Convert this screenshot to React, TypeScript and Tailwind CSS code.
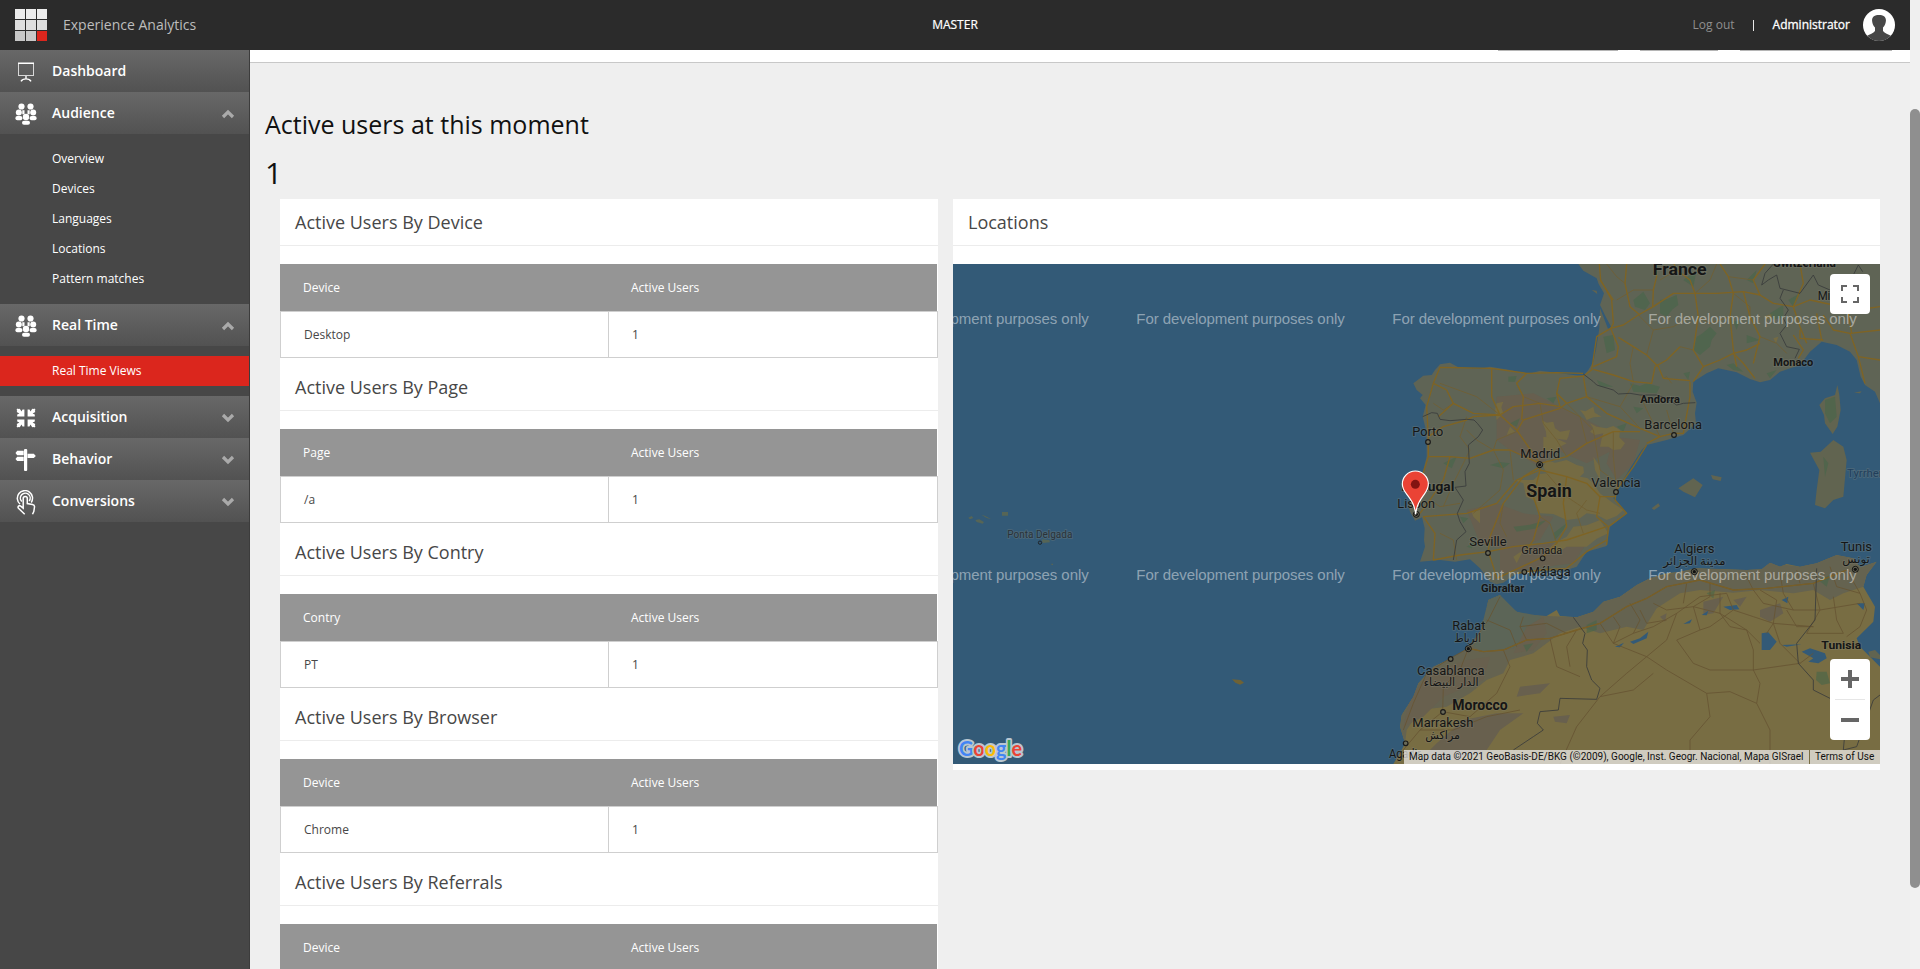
import type { ReactNode } from "react";

const SEA = "#335a77";

/* ---------- icons ---------- */

function BoardIcon() {
  return (
    <svg width="20" height="22" viewBox="0 0 20 22" fill="none" stroke="#fff">
      <rect x="2.5" y="2.5" width="15" height="12" stroke="#d8d8d8" />
      <path d="M2 2.2h16M10 15v3M5 20.4c1-1.8 2.6-2.5 5-2.5s4 .7 5 2.5" strokeWidth="1.4" />
    </svg>
  );
}

function PeopleIcon() {
  return (
    <svg width="22" height="22" viewBox="0 0 22 22" fill="#fff">
      <circle cx="6.5" cy="3.5" r="3.1" />
      <circle cx="15.5" cy="3.5" r="3.1" />
      <circle cx="3.8" cy="9.6" r="3" />
      <circle cx="18.2" cy="9.6" r="3" />
      <path d="M7.3 7.3h2.2v4H7.3zM12.500 7.3h2.2v4h-2.2z" />
      <rect x="0.4" y="13" width="7" height="4.2" rx="2" />
      <rect x="14.600" y="13" width="7" height="4.2" rx="2" />
      <circle cx="11" cy="14" r="3.2" />
      <rect x="7" y="17.8" width="8" height="4" rx="2" />
    </svg>
  );
}

function ArrowsInIcon() {
  const arrow = "M8.4 1.5V8.4H1.2V6.5L3.4 5.6 0.7 3.9 1.2 2.8 0.5 1.7 1.6 0.5 2.6 1.1 3.8 0.7 5.5 3.5 6.5 1.5Z";
  return (
    <svg width="20" height="20" viewBox="0 0 20 20" fill="#fff">
      <path d={arrow} />
      <path d={arrow} transform="matrix(-1 0 0 1 20 0)" />
      <path d={arrow} transform="matrix(1 0 0 -1 0 20)" />
      <path d={arrow} transform="matrix(-1 0 0 -1 20 20)" />
    </svg>
  );
}

function SignpostIcon() {
  return (
    <svg width="22" height="22" viewBox="0 0 22 22" fill="#fff">
      <path d="M2.2 1.8H8.7V6.2H2.2L0.5 4ZM2.2 7.7H8.7V12H2.2L0.5 9.9ZM12.5 4.7H18.8L20.8 6.9 18.8 9H12.5Z" />
      <rect x="9" y="0" width="3.2" height="22" rx="1" />
    </svg>
  );
}

function TouchIcon() {
  return (
    <svg width="20" height="25" viewBox="0 0 20 25" fill="none" stroke="#fff" strokeWidth="1.5">
      <path d="M4 14A7.6 7.6 0 1 1 15.2 12.5" />
      <path d="M5.8 11.5A4.900 4.900 0 1 1 13.2 11" />
      <path d="M8.7 24.3 2.5 18.3c-1.3-1.7.7-3.4 2.2-2.2l2.500 2V8.5c0-2.6 4.1-2.6 4.1 0v5l5.2.9c1.4.3 2.2 1.1 2 2.6l-.7 4.5-1.300 2.8" />
    </svg>
  );
}

function Chevron({ up }: { up?: boolean }) {
  return (
    <svg width="14" height="10" viewBox="0 0 14 10" fill="none" stroke="#aaa" strokeWidth="3.2">
      <path d={up ? "M2 8 7 3l5 5" : "M2 2l5 5 5-5"} />
    </svg>
  );
}

/* ---------- sidebar ---------- */

function NavItem({ icon, label, chevron }: { icon: ReactNode; label: string; chevron?: "up" | "down" }) {
  return (
    <div className="flex h-[42px] items-center bg-linear-to-b from-[#686868] to-[#525252] pr-[14px] text-sm font-semibold text-white">
      <div className="flex w-[52px] items-center justify-center pt-[2px]">{icon}</div>
      <div className="flex-1 pb-px">{label}</div>
      {chevron && (
        <div className="pt-[2px]">
          <Chevron up={chevron === "up"} />
        </div>
      )}
    </div>
  );
}

function SubMenu({ items, active }: { items: string[]; active?: string }) {
  return (
    <div className="py-[10px]">
      {items.map((item) => (
        <div
          key={item}
          className={
            item === active
              ? "flex h-[30px] items-center bg-[#db261d] pl-[52px] text-xs text-white"
              : "flex h-[30px] items-center pl-[52px] text-xs text-white"
          }
        >
          {item}
        </div>
      ))}
    </div>
  );
}

function Sidebar() {
  return (
    <nav className="w-[250px] shrink-0 border-r border-[#3c3c3c] bg-[#474747]">
      <NavItem icon={<BoardIcon />} label="Dashboard" />
      <NavItem icon={<PeopleIcon />} label="Audience" chevron="up" />
      <SubMenu items={["Overview", "Devices", "Languages", "Locations", "Pattern matches"]} />
      <NavItem icon={<PeopleIcon />} label="Real Time" chevron="up" />
      <SubMenu items={["Real Time Views"]} active="Real Time Views" />
      <NavItem icon={<ArrowsInIcon />} label="Acquisition" chevron="down" />
      <NavItem icon={<SignpostIcon />} label="Behavior" chevron="down" />
      <NavItem icon={<TouchIcon />} label="Conversions" chevron="down" />
    </nav>
  );
}

/* ---------- header ---------- */

const logoCells = [
  "bg-[#ececec]", "bg-[#ececec]", "bg-[#ececec]",
  "bg-[#dedede]", "bg-[#dedede]", "bg-[#dedede]",
  "bg-[#c8c8c8]", "bg-[#c8c8c8]", "bg-[#db261d]",
];

function Header() {
  return (
    <header className="grid h-[50px] w-[1910px] shrink-0 grid-cols-3 items-center bg-[#2b2b2b] text-xs text-white">
      <div className="flex items-center gap-4 pl-[15px]">
        <div className="grid grid-cols-[10px_10px_10px] gap-px">
          {logoCells.map((c, i) => (
            <div key={i} className={`size-[10px] ${c}`} />
          ))}
        </div>
        <span className="text-sm text-[#bdbdbd]">Experience Analytics</span>
      </div>
      <div className="text-center [-webkit-text-stroke:0.2px_white]">MASTER</div>
      <div className="flex items-center justify-end pr-[15px]">
        <span className="text-[#8f8f8f]">Log out</span>
        <span className="mr-[19px] ml-[18px] h-[11px] w-px bg-[#e8e8e8]" />
        <span className="[-webkit-text-stroke:0.3px_white]">Administrator</span>
        <svg className="ml-[13px]" width="32" height="32" viewBox="0 0 32 32">
          <circle cx="16" cy="16" r="16" fill="#fff" />
          <path
            d="M16 6c-4.500 0-7.3 2-6.9 6 .3 3 1.3 5 2.9 6.500v3.500c-1.500 2-5.500 3.500-7.8 4.800A16 16 0 0 0 27.800 26.800C25.500 25.500 21.500 24 20 22v-3.500c1.600-1.500 2.600-3.500 2.900-6.500.4-4-2.400-6-6.900-6Z"
            fill="#474747"
          />
        </svg>
      </div>
    </header>
  );
}

/* ---------- panels ---------- */

function PanelTitle({ children }: { children: ReactNode }) {
  return (
    <h3 className="mb-[18px] flex h-[47px] items-center border-b border-[#ececec] pl-[15px] text-lg text-[#474747]">
      {children}
    </h3>
  );
}

type SectionData = { title: string; column: string; row?: { name: string; count: number } };

const sections: SectionData[] = [
  { title: "Active Users By Device", column: "Device", row: { name: "Desktop", count: 1 } },
  { title: "Active Users By Page", column: "Page", row: { name: "/a", count: 1 } },
  { title: "Active Users By Contry", column: "Contry", row: { name: "PT", count: 1 } },
  { title: "Active Users By Browser", column: "Device", row: { name: "Chrome", count: 1 } },
  { title: "Active Users By Referrals", column: "Device" },
];

function Section({ title, column, row }: SectionData) {
  return (
    <section className="h-[165px]">
      <PanelTitle>{title}</PanelTitle>
      <div className="mr-px grid h-[47px] grid-cols-[328px_1fr] items-center bg-[#959595] text-xs text-white">
        <div className="pl-[23px]">{column}</div>
        <div className="pl-[23px]">Active Users</div>
      </div>
      {row && (
        <div className="grid h-[47px] grid-cols-[328px_1fr] border border-[#cfcfcf] text-xs text-[#474747]">
          <div className="flex items-center border-r border-[#cfcfcf] pl-[23px]">{row.name}</div>
          <div className="flex items-center pl-[23px]">{row.count}</div>
        </div>
      )}
    </section>
  );
}

/* ---------- map ---------- */

const EUROPE =
  "M535 42 550 62 590 85 596 102 612 130 600 165 618 202 634 232 624 236 610 200 600 175 598 235 588 300 580 335 565 360 550 378 520 375 470 368 420 362 385 372 330 360 270 350 240 356 175 352 150 338 120 343 105 360 95 375 70 377 40 400 50 420 68 435 60 445 77 465 68 500 78 540 80 580 80 620 62 690 45 720 25 765 30 785 45 812 66 802 74 835 72 870 75 890 60 935 120 930 165 935 210 928 240 955 270 995 290 1003 310 998 350 970 410 965 500 960 530 950 560 905 620 888 630 830 682 790 640 745 655 715 690 655 725 600 740 585 800 570 850 555 888 520 885 490 890 458 878 425 880 395 920 370 955 355 1010 367 1050 387 1080 397 1110 390 1140 365 1200 345 1230 305 1265 275 1310 285 1350 305 1370 330 1382 380 1395 405 1425 425 1440 460V42Z";

const AFRICA =
  "M-20 1542 5 1500 15 1480 0 1430 5 1395 40 1340 55 1300 100 1250 155 1225 210 1190 240 1150 258 1090 265 1050 300 1035 315 1060 350 1085 380 1095 440 1098 470 1080 480 1098 530 1102 580 1085 610 1055 660 1040 710 1005 750 985 800 970 840 965 890 955 960 957 1040 960 1085 958 1110 938 1140 950 1160 942 1200 950 1250 940 1310 915 1360 925 1380 952 1430 935 1400 975 1390 1010 1425 1070 1420 1115 1370 1165 1380 1190 1410 1220 1440 1250V1542Z";

const COASTAL_AFRICA =
  "M265 1050 300 1035 315 1060 350 1085 380 1095 440 1098 530 1102 580 1085 610 1055 660 1040 710 1005 750 985 840 965 890 955 1040 960 1110 938 1200 950 1310 915 1360 925 1380 952 1430 935 1400 975 1390 1010 1330 1030 1290 1050 1240 1020 1180 1030 1080 1020 1000 1028 900 1020 840 1030 770 1075 730 1140 680 1130 600 1150 540 1130 480 1150 440 1180 400 1210 330 1230 310 1270 260 1290 210 1330 140 1370 60 1380 20 1440 15 1480 0 1430 5 1395 40 1340 55 1300 100 1250 155 1225 210 1190 240 1150Z";

const IBERIAN_HILLS = [
  "M290 440 400 430 480 470 540 500 600 530 640 600 560 640 470 600 420 650 330 600 290 570Z",
  "M200 780 290 760 370 790 460 800 420 870 330 900 240 880Z",
  "M640 560 720 570 700 640 650 690 620 640Z",
  "M300 890 440 880 560 880 520 940 400 955 300 970Z",
];

const AFRICAN_HILLS = [
  "M380 1130 430 1100 440 1150 400 1200 340 1210Z",
  "M30 1340 90 1270 200 1230 270 1220 250 1290 130 1340 70 1400 10 1430Z",
  "M190 1410 290 1390 370 1390 300 1440 260 1500 170 1530 60 1530 110 1480Z",
  "M360 1310 450 1300 420 1330 350 1340ZM460 1400 510 1395 500 1420 465 1415ZM1080 1080 1140 1060 1150 1090 1110 1115 1080 1100Z",
  "M910 1055 970 1040 940 1090 910 1095ZM780 1100 800 1090 795 1115ZM1000 1050 1040 1040 1020 1070Z",
];

const YELLOW = [
  "M425 510 440 518 460 515 465 535 480 545 510 540 505 560 500 570 470 566 440 575 438 545ZM570 520 590 530 620 535 640 528 660 540 658 562 675 580 662 598 640 600 625 590 600 590 604 570 610 550 585 555 570 545 580 535Z",
  "M440 630 465 638 500 630 530 645 550 650 552 668 540 680 562 684 580 700 600 730 640 760 670 780 650 798 620 810 590 794 560 790 540 805 500 810 460 792 420 790 412 770 400 750 378 740 370 700 340 690 400 690 420 672 440 670 430 650Z",
  "M290 460 310 455 304 472 310 490 290 510 285 480ZM540 480 556 484 580 470 584 488 605 500 580 502 560 510 552 495ZM330 530 345 545 320 555Z",
  "M520 830 560 826 600 810 625 850 590 866 560 890 500 890 470 910 440 900 470 876 500 860ZM215 785 240 780 240 820 220 800Z",
  "M430 560 470 566 500 580 480 590 460 605 430 600ZM580 620 600 650 600 690 585 660Z",
  "M340 920 370 900 350 940ZM1120 265 1135 260 1128 280ZM1090 200 1120 190 1110 210Z",
];

const GREEN = [
  "M700 150 730 125 750 160 735 180 705 170ZM780 150 800 148 830 135 835 165 818 178 800 200 780 190ZM610 260 640 255 645 300 620 310Z",
  "M890 260 905 252 930 230 950 250 935 270 930 290 900 315 880 300ZM690 400 720 408 740 400 780 410 770 430 700 425ZM590 390 640 410 600 410Z",
  "M850 90 890 60 880 110ZM1000 215 1020 210 1010 240ZM1110 190 1150 165 1150 200 1120 210ZM1040 255 1080 270 1040 280Z",
  "M980 345 1000 340 1030 365 1000 360ZM1100 370 1130 360 1110 385ZM325 380 350 378 345 395 325 395Z",
  "M270 645 300 636 330 640 310 655ZM130 640 170 620 155 655ZM330 520 360 505 350 530ZM440 445 470 440 460 460Z",
  "M340 830 390 824 440 810 410 835 350 845ZM460 850 500 820 490 840 465 870ZM180 800 205 805 190 820ZM200 890 225 875 215 895Z",
  "M650 530 680 520 670 545ZM850 370 870 365 865 390ZM700 470 730 475 710 490ZM1275 450 1305 440 1310 500 1290 520 1275 490Z",
  "M1270 620 1285 640 1275 680ZM1250 1265 1280 1265 1290 1300 1265 1305 1248 1290ZM370 1185 400 1180 380 1205Z",
  "M560 1125 590 1110 590 1140 560 1150ZM920 1030 945 1020 940 1045ZM1255 990 1290 975 1280 1010ZM1040 90 1070 60 1060 100ZM1165 150 1200 130 1180 170Z",
];

const ROADS = [
  "M598 42 602 90 635 150 640 220 632 235 590 260 575 360 550 378",
  "M632 235 670 225 715 195 760 170 820 130 885 130 950 130 1030 125 1080 135 1120 160",
  "M632 235 655 290 650 320 580 350M655 262 700 290 740 315 775 350 790 385 870 392",
  "M765 350 800 330 840 290M765 350 755 400 700 395 640 375 580 358",
  "M758 170 760 120 770 80 765 42M640 150 600 90M720 195 690 170 675 100 680 42",
  "M885 130 895 200 880 300 910 350 880 395M885 130 870 90 830 60 822 42M960 42 985 80 1000 130 990 200 1000 300 1010 350",
  "M910 350 960 330 1000 310 1040 300 1080 280M1000 310 1030 340 1065 385M1030 125 1050 200 1080 260 1060 340",
  "M1080 135 1060 90 1095 42M1120 160 1180 170 1230 150 1300 165 1370 180 1440 170",
  "M1200 42 1210 100 1180 170 1200 230 1220 280M1270 195 1300 240 1350 250 1440 240M1350 250 1375 320 1395 400M1440 330 1375 320",
  "M1200 240 1200 265 1270 270M1180 255 1210 300 1195 325M1250 190 1265 270M1375 130 1345 190 1355 250",
  "M550 378 480 385 470 430 480 470 420 460 340 470 300 495 220 500M550 378 560 440 620 490 720 535 780 560 740 580",
  "M550 370 470 368 380 370 275 355 120 352 100 400 80 470 85 560 85 620 60 700 45 760",
  "M100 400 140 420 160 460 115 500M160 460 220 490 300 495M275 355 275 440 300 495 350 540 420 640",
  "M470 430 500 460 480 475 370 510 350 545M560 440 500 460M380 370 350 400 370 440 365 510",
  "M85 620 150 620 210 625 280 600 330 600 420 640M85 560 130 530 200 510 220 500M150 620 130 690 90 750 60 790",
  "M420 640 420 660 400 740 420 800 400 870 380 900M420 640 500 620 560 580 640 545 720 545",
  "M420 660 500 680 560 700 600 740 645 740M420 660 350 690 290 760 200 790 70 800M420 650 370 680 310 760 270 860 265 905",
  "M870 395 870 440 850 550M780 560 820 550 850 550M740 585 700 650 650 720 645 750 680 790 625 830 620 885",
  "M600 740 590 800 625 830M500 680 490 760 500 830 470 880 430 920 290 985M265 905 340 890 430 880 500 870 560 850 620 830",
  "M265 905 280 950 290 985M265 905 180 915 100 930 105 850 70 800M350 970 420 960 500 955 560 905 620 870",
];

const MINOR_ROADS = [
  "M500 460 580 540 590 600 600 660 640 690M560 440 660 470 720 535M660 470 700 400M820 550 800 480M200 500 180 560 210 600 160 700 130 770",
  "M280 600 310 660 300 720 220 790M560 580 540 500 480 470M350 545 290 570 280 600M300 495 230 440 120 400",
  "M650 150 700 120 760 120M830 60 780 90M870 200 820 230 760 240 715 195M760 240 740 315M840 290 880 300M990 200 930 220 895 200M1000 130 1050 170 1050 200",
  "M950 42 930 90 885 130M620 42 650 80 675 100M985 80 1060 90M1080 260 1130 280 1160 310M560 750 530 790 550 850M330 600 340 690M440 670 500 740 560 780 600 790",
  "M200 540 230 570 280 600M90 750 120 770 180 760M120 850 160 870 170 930M320 860 300 820 310 760M470 880 450 820 420 800M100 460 130 480 160 460",
  "M700 290 690 340 700 395M815 400 800 380 790 385M720 435 740 480 780 560M640 545 640 620 650 720M420 460 430 520 470 570 500 620M370 440 420 460",
];

const AFRICAN_ROADS = [
  "M205 1195 250 1205 310 1200 380 1170 450 1165 530 1140 600 1120 680 1070 740 1045 800 1010 900 990 1000 1020 1100 1015 1240 1000 1340 960",
  "M205 1195 265 1110 300 1040M205 1195 150 1225 80 1270 40 1360 10 1440M205 1195 180 1260 130 1310 128 1385 60 1440 10 1500",
  "M310 1200 330 1250 290 1330 210 1400 128 1385M450 1165 470 1250 540 1280M380 1170 360 1130 370 1100M530 1140 500 1190 510 1250",
  "M600 1120 640 1180 740 1220 800 1170 830 1090 900 1040 980 1030M740 1220 800 1260 920 1330 930 1400 870 1470 870 1542",
  "M740 1220 680 1270 600 1340 530 1430 480 1542M830 1170 880 1240 930 1260 1060 1260 1200 1240 1240 1210M920 1330 990 1325 1070 1360 1110 1440 1110 1542",
  "M980 1030 1000 1080 1060 1100 1120 1120 1240 1130M1060 1260 1080 1300 1070 1360M760 1060 800 1080 880 1070 960 1090 1040 1140 1080 1180",
  "M1240 1000 1260 1080 1220 1150M1340 960 1380 1030 1400 1080 1380 1130 1340 1160M1260 1080 1380 1060M1220 1150 1330 1150M640 1180 700 1150 760 1130 830 1090",
  "M360 1130 440 1120 500 1150M260 1110 330 1140 350 1190M60 1440 160 1440 260 1400 360 1380M880 1070 900 1140 830 1170M960 1090 960 1030M1120 1120 1130 1050 1080 1020",
  "M1200 1240 1140 1180 1120 1120M690 1060 720 1110 700 1150M1060 1020 1090 1060 1180 1080 1260 1080M1000 1080 930 1130 900 1140M600 1340 700 1320 760 1270",
  "M640 1100 660 1130 640 1180M720 1080 740 1120 800 1110M1140 970 1150 1030 1180 1080M1040 980 1060 1020M1190 960 1200 1000M860 1000 850 1060M930 1000 930 1040 880 1070",
  "M1290 950 1310 1010 1380 1030M1300 1040 1310 1110 1330 1150M1040 1140 1060 1200 1060 1260M1120 1120 1100 1150M1160 1080 1190 1130 1240 1130M960 1090 990 1130 1040 1140",
];

const BORDERS = [
  "M68 500 95 488 112 490 120 508 150 512 200 508 222 510 232 520 248 540 235 560 205 585 208 640 195 665 198 708 165 712 190 750 172 790 180 815 198 845 170 870 160 930",
  "M550 372 580 395 590 405 640 420 655 432 690 430 720 435 770 435 800 445 830 465 850 460 886 458",
  "M1120 42 1095 70 1085 105 1105 90 1130 75 1140 115 1200 130 1240 75 1255 105 1290 120M1150 120 1140 145 1165 180 1150 205 1160 225 1140 250 1160 290 1198 298 1185 325M1360 75 1375 45 1388 65",
  "M520 1102 555 1150 548 1180 562 1200 560 1250 575 1290 600 1315 590 1348 480 1345 475 1380 420 1385 412 1420 430 1440 400 1460 340 1500",
  "M1250 955 1245 1110 1190 1180 1195 1240 1240 1290 1240 1320 1300 1350 1340 1390 1330 1500 1370 1490 1420 1350 1440 1335",
];

const LAKES = [
  "M970 1070 1010 1065 1018 1078 990 1080ZM850 1122 876 1108 870 1120ZM905 1095 925 1082 920 1096ZM690 1175 720 1165 745 1145 740 1165 700 1182ZM645 1190 672 1178 660 1192Z",
  "M1085 1150 1105 1147 1130 1175 1110 1200 1085 1200ZM1205 1205 1230 1195 1275 1210 1280 1225 1255 1240 1225 1235 1240 1225ZM1145 1185 1205 1183 1160 1190ZM1145 1050 1165 1040 1162 1060ZM1370 1060 1395 1060 1390 1080Z",
];

type Label = { t: string; x: number; y: number; w: number; s: number; bold?: boolean; fill?: string };

const LABELS: Label[] = [
  { t: "France", x: 758, y: 75, w: 162, s: 52, bold: true },
  { t: "Switzerland", x: 1120, y: 51, w: 188, s: 36, bold: true },
  { t: "Milan", x: 1253, y: 151, w: 84, s: 38 },
  { t: "Monaco", x: 1120, y: 347, w: 120, s: 33, bold: true },
  { t: "Andorra", x: 721, y: 458, w: 119, s: 33, bold: true },
  { t: "Barcelona", x: 733, y: 536, w: 173, s: 38 },
  { t: "Porto", x: 37, y: 557, w: 93, s: 38 },
  { t: "Madrid", x: 361, y: 623, w: 120, s: 38 },
  { t: "Spain", x: 379, y: 740, w: 136, s: 53, bold: true },
  { t: "Valencia", x: 574, y: 710, w: 148, s: 38 },
  { t: "Portugal", x: 4, y: 722, w: 159, s: 40, bold: true },
  { t: "Lisbon", x: -8, y: 773, w: 113, s: 38 },
  { t: "Seville", x: 208, y: 889, w: 112, s: 38 },
  { t: "Granada", x: 364, y: 911, w: 123, s: 34 },
  { t: "Málaga", x: 386, y: 977, w: 126, s: 38 },
  { t: "Gibraltar", x: 243, y: 1026, w: 130, s: 33, bold: true },
  { t: "Algiers", x: 823, y: 908, w: 120, s: 38 },
  { t: "مدينة الجزائر", x: 790, y: 946, w: 187, s: 34 },
  { t: "Tunis", x: 1322, y: 902, w: 94, s: 38 },
  { t: "تونس", x: 1327, y: 940, w: 82, s: 34 },
  { t: "Rabat", x: 157, y: 1140, w: 99, s: 38 },
  { t: "الرباط", x: 163, y: 1175, w: 80, s: 34 },
  { t: "Casablanca", x: 51, y: 1274, w: 203, s: 38 },
  { t: "الدار البيضاء", x: 71, y: 1309, w: 165, s: 34 },
  { t: "Morocco", x: 157, y: 1379, w: 166, s: 42, bold: true },
  { t: "Marrakesh", x: 37, y: 1430, w: 183, s: 38 },
  { t: "مراكش", x: 76, y: 1468, w: 104, s: 34 },
  { t: "Agadir", x: -33, y: 1523, w: 96, s: 36 },
  { t: "Tunisia", x: 1264, y: 1196, w: 120, s: 34, bold: true },
  { t: "Ponta Delgada", x: -1178, y: 865, w: 195, s: 32, fill: "#2b3338" },
  { t: "Tyrrhenian", x: 1341, y: 682, w: 160, s: 34, fill: "#213f5c" },
];

const TOWNS: [number, number][] = [
  [84, 576], [822, 555], [648, 726], [264, 909], [428, 925], [373, 966], [152, 1227], [129, 1386], [17, 1480],
];
const CAPITALS: [number, number][] = [[419, 644], [49, 793], [883, 965], [1366, 958], [205, 1196]];

const WATERMARKS: [number, number][] = [223, 991].flatMap((y) =>
  [-1559, -791, -23, 745].map((x) => [x, y] as [number, number]),
);

function MapDrawing() {
  return (
    <svg className="block" width="927" height="500" viewBox="-1341 42 2781 1500">
      <defs>
        <clipPath id="africa">
          <path d={AFRICA} />
        </clipPath>
        <clipPath id="europe">
          <path d={EUROPE} />
        </clipPath>
      </defs>
      <rect x="-1341" y="42" width="2781" height="1500" fill={SEA} />
      <path d={EUROPE} fill="#5f6455" />
      <path d={AFRICA} fill="#786d43" />
      <path d={COASTAL_AFRICA} fill="#656350" clipPath="url(#africa)" />
      <path d="M265 1050 300 1035 350 1085 420 1098 430 1120 380 1150 340 1195 250 1205 220 1190 240 1150Z" fill="#5c6557" />
      <g clipPath="url(#europe)">
        {IBERIAN_HILLS.map((d) => <path key={d} d={d} fill="#675f4f" />)}
        {YELLOW.map((d) => <path key={d} d={d} fill="#756b43" />)}
      </g>
      <g clipPath="url(#africa)">
        {AFRICAN_HILLS.map((d) => <path key={d} d={d} fill="#68604e" />)}
      </g>
      <path
        d="M1312 405 1318 435 1322 480 1312 530 1298 552 1275 520 1272 495 1258 465 1275 445 1305 435ZM1300 570 1330 590 1340 630 1330 740 1300 750 1275 775 1245 765 1250 720 1258 660 1230 608 1262 605ZM835 715 880 685 908 705 885 742 850 725ZM933 675 965 682 962 693 938 688ZM755 775 775 760 780 768 762 780ZM1362 428 1385 424 1380 430ZM1405 1205 1425 1200 1440 1215V1228L1410 1222ZM575 120 590 122 592 132Z"
        fill="#616450"
      />
      {GREEN.map((d) => <path key={d} d={d} fill="#46654a" opacity=".6" />)}
      <path d="M-1295 803-1285 798-1280 804-1290 808ZM-1274 810-1262 808-1248 816-1252 821-1270 816ZM-1256 794-1244 798-1226 808-1240 804ZM-1194 786H-1176V797H-1194ZM-1075 868-1052 870-1050 877-1072 879ZM-1046 941H-1041V945H-1046Z" fill="#566556" />
      <path d="M-504 1288-478 1290-468 1298-480 1304-494 1298Z" fill="#6f6235" />
      {LAKES.map((d) => <path key={d} d={d} fill={SEA} />)}
      <g fill="none" stroke="#715f33" strokeWidth="2.500" strokeLinejoin="round">
        {MINOR_ROADS.map((d) => <path key={d} d={d} />)}
      </g>
      <g fill="none" stroke="#7f6424" strokeWidth="4" strokeLinejoin="round">
        {ROADS.map((d) => <path key={d} d={d} />)}
      </g>
      <g fill="none" stroke="#665433" strokeWidth="2.500" strokeLinejoin="round">
        {AFRICAN_ROADS.map((d) => <path key={d} d={d} />)}
      </g>
      <path d={AFRICAN_ROADS[0]} fill="none" stroke="#785f28" strokeWidth="4" />
      <g fill="none" stroke="#393b3b" strokeWidth="2.500" strokeLinejoin="round">
        {BORDERS.map((d) => <path key={d} d={d} />)}
      </g>
      <g fill="#fff" fillOpacity=".46" fontFamily="'Liberation Sans', sans-serif" fontSize="45">
        {WATERMARKS.map(([x, y]) => (
          <text key={`${x},${y}`} x={x} y={y} textLength="625">For development purposes only</text>
        ))}
      </g>
      <g fill="none" stroke="#1a1a1a" strokeWidth="3.500">
        {TOWNS.map(([x, y]) => <circle key={`${x},${y}`} cx={x} cy={y} r="7" fill="#6a6a58" />)}
        <circle cx="-1080" cy="878" r="5" strokeWidth="2.500" />
      </g>
      {CAPITALS.map(([x, y]) => (
        <g key={`${x},${y}`}>
          <circle cx={x} cy={y} r="9" fill="#6a6a58" stroke="#111" strokeWidth="3" />
          <circle cx={x} cy={y} r="5" fill="#111" />
        </g>
      ))}
      <g fontFamily="Roboto, 'Noto Sans', 'DejaVu Sans', sans-serif" paintOrder="stroke" strokeLinejoin="round">
        {LABELS.map((l) => (
          <text
            key={l.t}
            x={l.x}
            y={l.y}
            textLength={l.w}
            lengthAdjust="spacingAndGlyphs"
            fontSize={l.s}
            fontWeight={l.bold ? 700 : 400}
            fill={l.fill ?? "#151616"}
            stroke="#8a8a80"
            strokeOpacity=".25"
            strokeWidth="6"
          >
            {l.t}
          </text>
        ))}
      </g>
      <path
        d="M47 793C44 763 34 751 19 731 11 721 7 713 7 702a39 39 0 0 1 78 0C85 713 81 721 74 731 60 751 50 763 47 793Z"
        fill="#ea4335"
        stroke="#fff"
        strokeWidth="3.500"
      />
      <circle cx="46" cy="703" r="13.500" fill="#811411" />
    </svg>
  );
}

function GoogleLogo() {
  return (
    <svg className="absolute bottom-0 left-[4px]" width="68" height="28" viewBox="0 0 68 28">
      <text
        x="2"
        y="19.500"
        textLength="63"
        lengthAdjust="spacingAndGlyphs"
        fontFamily="Lato, sans-serif"
        fontWeight="700"
        fontSize="21.500"
        stroke="#b9c7d1"
        strokeWidth="4"
        strokeLinejoin="round"
        paintOrder="stroke"
      >
        <tspan fill="#4285f4">G</tspan>
        <tspan fill="#ea4335">o</tspan>
        <tspan fill="#fbbc05">o</tspan>
        <tspan fill="#4285f4">g</tspan>
        <tspan fill="#34a853">l</tspan>
        <tspan fill="#ea4335">e</tspan>
      </text>
    </svg>
  );
}

function MapView() {
  return (
    <div className="relative h-[500px] w-[927px] overflow-hidden">
      <MapDrawing />
      <GoogleLogo />
      <div className="absolute top-[10px] right-[10px] flex size-10 items-center justify-center rounded-sm bg-white">
        <svg width="18" height="18" viewBox="0 0 18 18" fill="none" stroke="#666" strokeWidth="2">
          <path d="M1 6V1h5M12 1h5v5M17 12v5h-5M6 17H1v-5" />
        </svg>
      </div>
      <div className="absolute right-[10px] bottom-[24px] flex h-[81px] w-10 flex-col items-center rounded-sm bg-white">
        <div className="flex h-[41px] w-[30px] items-center justify-center border-b border-[#e6e6e6]">
          <svg width="18" height="18" viewBox="0 0 18 18" stroke="#666" strokeWidth="4">
            <path d="M0 9h18M9 0v18" />
          </svg>
        </div>
        <div className="flex h-10 items-center">
          <div className="h-1 w-[18px] bg-[#666]" />
        </div>
      </div>
      <div className="absolute right-0 bottom-0 flex h-[14px] items-center font-[Roboto,sans-serif] text-[10px] leading-[14px] text-[#111]">
        <div className="h-full w-[405px] bg-[#f5f5f5]/70 pl-[5px] whitespace-nowrap">
          Map data ©2021 GeoBasis-DE/BKG (©2009), Google, Inst. Geogr. Nacional, Mapa GISrael
        </div>
        <div className="h-full w-px bg-[#786d43]" />
        <div className="h-full w-[70px] bg-[#f5f5f5]/70 pl-[5px] whitespace-nowrap">Terms of Use</div>
      </div>
    </div>
  );
}

/* ---------- page ---------- */

export default function App() {
  return (
    <div className="flex h-[969px] w-[1920px] flex-col overflow-hidden bg-[#efefef] font-['Open_Sans',sans-serif]">
      <Header />
      <div className="flex min-h-0 flex-1">
        <Sidebar />
        <main className="w-[1660px] shrink-0">
          <div className="flex h-[13px] justify-end border-b border-[#c8c8c8] bg-white pr-[18px]">
            <div className="mr-[22px] h-px w-[120px] bg-[#b5b5b5]" />
            <div className="mr-[22px] h-px w-[78px] bg-[#b5b5b5]" />
            <div className="h-px w-[152px] bg-[#b5b5b5]" />
          </div>
          <div className="pt-[43px] pl-[15px] text-[#111]">
            <h1 className="h-[36px] text-[25px] leading-[36px]">Active users at this moment</h1>
            <div className="mt-[9px] h-[48px] pt-[4px] text-[30px] leading-[36px]">1</div>
          </div>
          <div className="flex items-start gap-[15px] pl-[30px]">
            <div className="w-[658px] bg-white">
              {sections.map((s) => (
                <Section key={s.title} {...s} />
              ))}
            </div>
            <div className="w-[927px] bg-white pb-[6px]">
              <PanelTitle>Locations</PanelTitle>
              <MapView />
            </div>
          </div>
        </main>
        <div className="w-[10px] bg-[#f1f1f1] pt-[59px]">
          <div className="h-[779px] rounded-full bg-[#8f8f8f]" />
        </div>
      </div>
    </div>
  );
}
